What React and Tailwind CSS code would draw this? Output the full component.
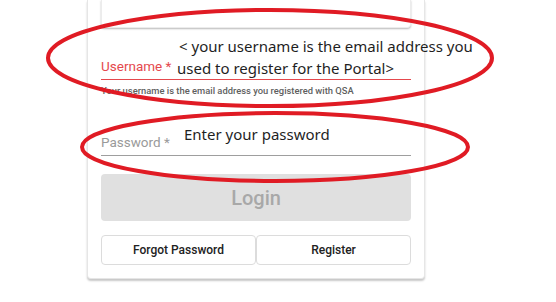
export default function App() {
  return (
    <div className="relative w-[556px] h-[302px] bg-white overflow-hidden" style={{ fontFamily: "Roboto, 'Liberation Sans', sans-serif" }}>
      <div className="ml-[87px] w-[338px] bg-white border border-t-0 border-[#e6e6e6] rounded-b-[4px] shadow-[0_2px_2px_rgba(0,0,0,0.22)] px-[13px] pb-[13px]">
        <div className="h-[28px] rounded-b-[4px] bg-white border border-t-0 border-[#ececec] shadow-[0_1px_2px_rgba(0,0,0,0.28)]"></div>
        <div className="mt-[10px] h-[42px] flex items-end border-b border-[#e5484d]">
          <span className="shrink-0 text-[13.5px] text-[#e5484d] pb-[6px] leading-none w-[76px] whitespace-nowrap">Username *</span>
          <div className="text-[15px] leading-[22px] text-[#1f1f1f] whitespace-nowrap" style={{ fontFamily: "'Noto Sans', 'Open Sans', sans-serif" }}>
            <div className="pl-[2px]">&lt; your username is the email address you</div>
            <div>used to register for the Portal&gt;</div>
          </div>
        </div>
        <div className="mt-[5px] text-[9.4px] font-medium text-[#5f5f5f] leading-[11px] whitespace-nowrap">Your username is the email address you registered with QSA</div>
        <div className="mt-[25px] h-[35px] flex items-end border-b border-[#9e9e9e]">
          <span className="shrink-0 text-[13.5px] text-[#9a9a9a] pb-[6px] leading-none w-[83px] whitespace-nowrap">Password *</span>
          <span className="mt-[3px] text-[15px] text-[#1f1f1f] leading-[21px] self-start" style={{ fontFamily: "'Noto Sans', 'Open Sans', sans-serif" }}>Enter your password</span>
        </div>
        <div className="mt-[18px] h-[47px] rounded-[4px] bg-[#e0e0e0] flex items-center justify-center text-[20px] font-medium text-[#a8a8a8]">Login</div>
        <div className="mt-[14px] h-[30px] flex">
          <div className="flex-1 border border-[#dcdcdc] rounded-[4px] flex items-center justify-center text-[12px] font-medium text-[#222]">Forgot Password</div>
          <div className="flex-1 border border-[#dcdcdc] rounded-[4px] flex items-center justify-center text-[12px] font-medium text-[#222]">Register</div>
        </div>
      </div>
      <svg className="absolute inset-0 pointer-events-none" width="556" height="302" viewBox="0 0 556 302">
        <ellipse cx="270" cy="58" rx="222" ry="48" fill="none" stroke="#e01b24" strokeWidth="4" />
        <ellipse cx="275" cy="147" rx="193" ry="34" fill="none" stroke="#e01b24" strokeWidth="4" />
      </svg>
    </div>
  );
}
